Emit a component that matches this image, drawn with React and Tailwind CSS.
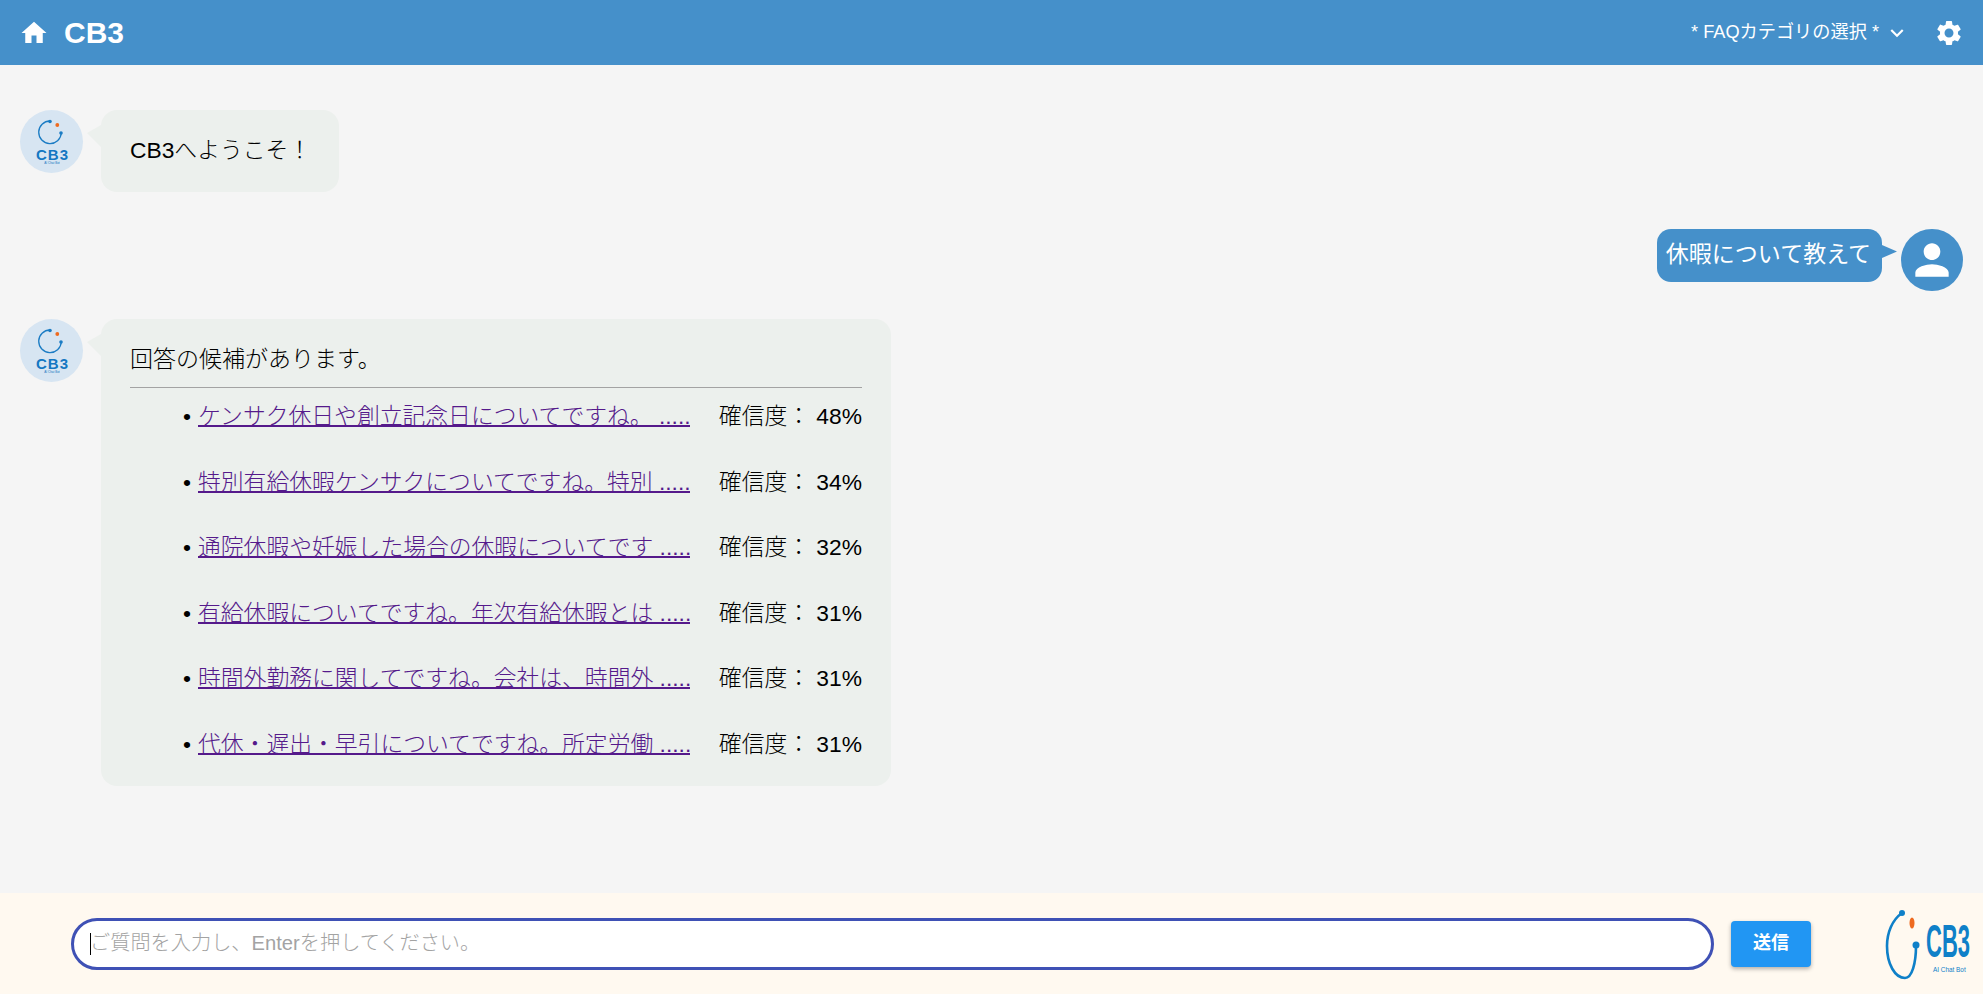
const FONT = '[font-family:"Liberation_Sans","Noto_Sans_CJK_JP",sans-serif]';

function Mi({ d, className }) {
  return (
    <svg viewBox="0 0 24 24" fill="currentColor" className={className}>
      <path d={d} />
    </svg>
  );
}

function BotAvatar() {
  return (
    <div className="w-[63px] h-[63px] shrink-0 rounded-full bg-[#d7e5f2] flex items-center justify-center">
      <svg viewBox="0 0 63 63" className="w-[63px] h-[63px]">
        <path d="M30 11 A11.3 11.3 0 1 0 41.3 23" fill="none" stroke="#1b7cc4" strokeWidth="1.3" />
        <circle cx="30" cy="11.5" r="1.8" fill="#1b7cc4" />
        <circle cx="41" cy="23" r="1.8" fill="#1b7cc4" />
        <circle cx="37.3" cy="15" r="1.9" fill="#ee6a1f" />
        <text x="16" y="50" fill="#1477c2" fontSize="15" fontWeight="700" letterSpacing="1" fontFamily="Liberation Sans, sans-serif">CB3</text>
        <text x="32" y="54" textAnchor="middle" fill="#1477c2" fontSize="3" fontFamily="Liberation Sans, sans-serif">AI Chat Bot</text>
      </svg>
    </div>
  );
}

function BotBubble({ children, className }) {
  return (
    <div className={`relative ml-[18px] rounded-[16px] bg-[#ecf0ed] ${className}`}>
      <div className="absolute left-[-14px] top-[15px] w-[14px] h-[22px] bg-[#ecf0ed] [clip-path:polygon(0_36%,100%_0,100%_100%)]" />
      {children}
    </div>
  );
}

const ROWS = [
  ["ケンサク休日や創立記念日についてですね。 .....", "48%"],
  ["特別有給休暇ケンサクについてですね。特別 .....", "34%"],
  ["通院休暇や妊娠した場合の休暇についてです .....", "32%"],
  ["有給休暇についてですね。年次有給休暇とは .....", "31%"],
  ["時間外勤務に関してですね。会社は、時間外 .....", "31%"],
  ["代休・遅出・早引についてですね。所定労働 .....", "31%"],
];

export default function App() {
  return (
    <div className={`h-screen flex flex-col overflow-hidden bg-[#f5f5f5] text-black ${FONT}`}>
      <header className="h-[65px] shrink-0 bg-[#4590ca] text-white flex items-center pl-[19px] pr-[19px]">
        <Mi d="M10 20v-6h4v6h5v-8h3L12 3 2 12h3v8z" className="w-[30px] h-[30px]" />
        <span className="ml-[15px] text-[30px] font-bold leading-none">CB3</span>
        <div className="ml-auto flex items-center">
          <span className="text-[18.2px] leading-none">* FAQカテゴリの選択 *</span>
          <Mi d="M16.59 8.59L12 13.17 7.41 8.59 6 10l6 6 6-6z" className="w-[26px] h-[26px] ml-[5px]" />
          <Mi d="M19.14 12.94c.04-.3.06-.61.06-.94 0-.32-.02-.64-.07-.94l2.03-1.58c.18-.14.23-.41.12-.61l-1.92-3.32c-.12-.22-.37-.29-.59-.22l-2.39.96c-.5-.38-1.03-.7-1.62-.94l-.36-2.54c-.04-.24-.24-.41-.48-.41h-3.84c-.24 0-.43.17-.47.41l-.36 2.54c-.59.24-1.13.57-1.62.94l-2.39-.96c-.22-.08-.47 0-.59.22L2.74 8.87c-.12.21-.08.47.12.61l2.03 1.58c-.05.3-.09.63-.09.94s.02.64.07.94l-2.03 1.58c-.18.14-.23.41-.12.61l1.92 3.32c.12.22.37.29.59.22l2.39-.96c.5.38 1.03.7 1.62.94l.36 2.54c.05.24.24.41.48.41h3.84c.24 0 .44-.17.47-.41l.36-2.54c.59-.24 1.13-.56 1.62-.94l2.39.96c.22.08.47 0 .59-.22l1.92-3.32c.12-.22.07-.47-.12-.61l-2.01-1.58zM12 15.6c-1.98 0-3.6-1.62-3.6-3.6s1.62-3.6 3.6-3.6 3.6 1.62 3.6 3.6-1.62 3.6-3.6 3.6z" className="w-[30px] h-[30px] ml-[24px]" />
        </div>
      </header>

      <main className="flex-1 min-h-0 flex flex-col pt-[45px] pl-[20px] pr-[20px]">
        <div className="flex items-start">
          <BotAvatar />
          <BotBubble className="w-[238px] h-[82px] pl-[29px] pt-[25px] text-[22.8px] leading-[30px] font-light">
            CB3へようこそ！
          </BotBubble>
        </div>

        <div className="flex items-start justify-end mt-[37px]">
          <div className="relative mr-[19px] h-[53px] rounded-[14px] bg-[#4590ca] text-white pl-[9px] pr-[11px] pt-[10px] text-[23px] leading-[30px]">
            休暇について教えて
            <div className="absolute right-[-15px] top-[16px] w-[15px] h-[13px] bg-[#4590ca] [clip-path:polygon(0_0,100%_50%,0_100%)]" />
          </div>
          <div className="w-[62px] h-[62px] rounded-full bg-[#4590ca] text-white flex items-center justify-center">
            <Mi d="M12 12c2.21 0 4-1.79 4-4s-1.79-4-4-4-4 1.79-4 4 1.79 4 4 4zm0 2c-2.67 0-8 1.34-8 4v2h16v-2c0-2.66-5.33-4-8-4z" className="w-[50px] h-[50px]" />
          </div>
        </div>

        <div className="flex items-start mt-[28px]">
          <BotAvatar />
          <BotBubble className="w-[790px] h-[467px] px-[29px] pt-[25px]">
            <div className="text-[23px] leading-[30px] font-light pb-[13px] border-b border-[#a3a3a3]">回答の候補があります。</div>
            <ul className="mt-[13px]">
              {ROWS.map(([t, p]) => (
                <li key={t} className="h-[65.6px] flex items-start text-[22.8px] leading-[30px] font-light">
                  <span className="ml-[53px] w-[15px] shrink-0 font-normal">•</span>
                  <a href="#" className="w-[492px] shrink-0 whitespace-pre overflow-hidden text-[#551a8b] underline decoration-2">{t}</a>
                  <span className="ml-auto whitespace-pre">確信度： {p}</span>
                </li>
              ))}
            </ul>
          </BotBubble>
        </div>
      </main>

      <footer className="h-[101px] shrink-0 bg-[#fff9f0] flex items-center pl-[71px] pr-[11px]">
        <div className="relative flex-1 h-[52px]">
          <input
            readOnly
            placeholder="ご質問を入力し、Enterを押してください。"
            className="w-full h-full rounded-full border-[3px] border-[#3f51b5] bg-white pl-[16px] pr-4 text-[20.2px] outline-none caret-transparent placeholder:text-[#a3a3a3] placeholder:font-light"
          />
          <span className="absolute left-[19px] top-[15px] w-px h-[22px] bg-black" />
        </div>
        <button className="ml-[17px] w-[80px] h-[46px] rounded-[4px] bg-[#2196f3] text-white text-[18px] font-bold shadow-[0_2px_4px_rgba(0,0,0,0.3)]">送信</button>
        <svg viewBox="0 0 87 72" className="w-[87px] h-[72px] ml-[74px]">
          <path d="M17 5 C7 12 2 25 2 38 C2 56 10 70 20 70 C27 70 31 55 31 38" fill="none" stroke="#0f80c8" strokeWidth="2.6" />
          <circle cx="17" cy="5" r="3" fill="#0f80c8" />
          <circle cx="31" cy="37" r="3.5" fill="#0f80c8" />
          <ellipse cx="27" cy="15" rx="2.5" ry="5.5" fill="#ee6a1f" />
          <text transform="translate(41 49) scale(0.478 1)" fill="#0f80c8" fontSize="46" fontWeight="700" fontFamily="Liberation Sans, sans-serif">CB3</text>
          <text transform="translate(48 64) scale(0.8 1)" fill="#0f80c8" fontSize="8" fontFamily="Liberation Sans, sans-serif">AI Chat Bot</text>
        </svg>
      </footer>
    </div>
  );
}
